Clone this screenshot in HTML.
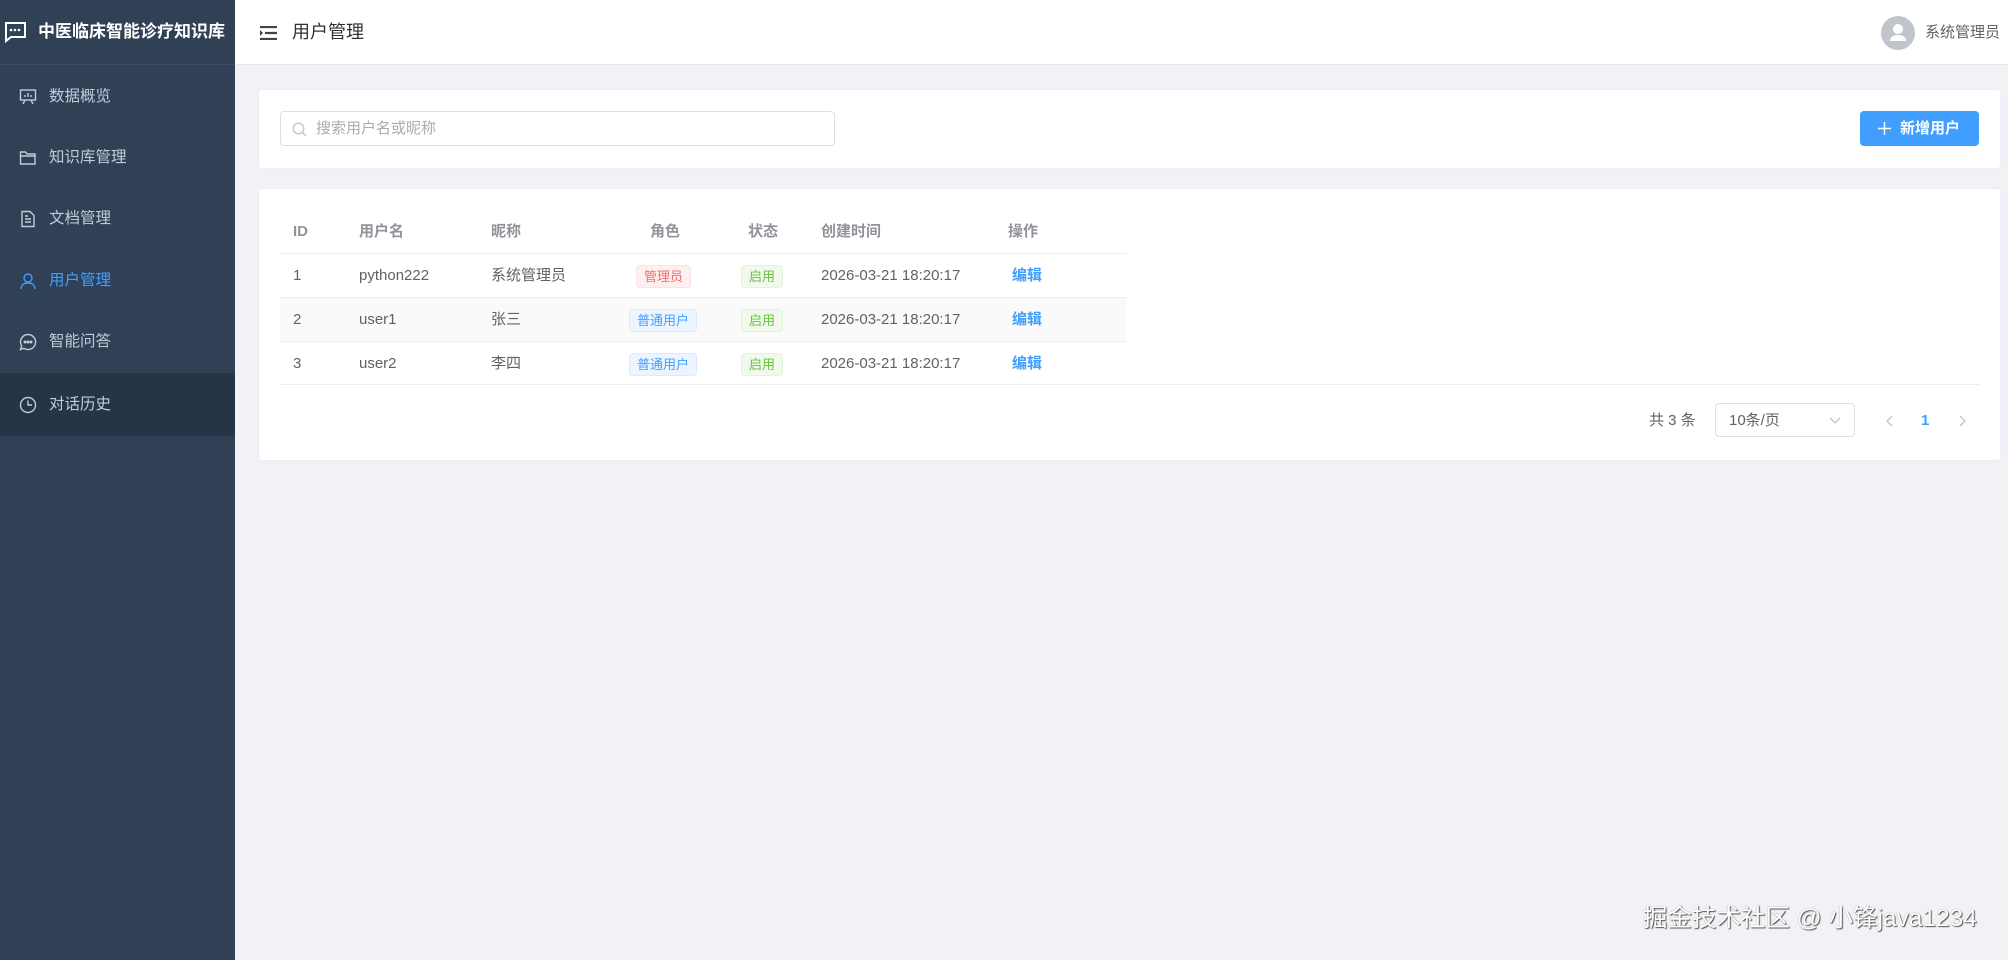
<!DOCTYPE html>
<html><head><meta charset="utf-8"><style>
*{margin:0;padding:0;box-sizing:border-box}
body{width:2008px;height:960px;overflow:hidden;background:#f0f2f5;font-family:"Liberation Sans","Noto Sans CJK SC",sans-serif;position:relative;color:#606266}
.side{position:absolute;left:0;top:0;width:235px;height:960px;background:#304156}
.logo{height:65px;border-bottom:1px solid #3b4a61;display:flex;align-items:center;padding-left:3px;color:#fff;font-weight:bold;font-size:17px;white-space:nowrap;line-height:20px}
.logo svg{margin-right:11px;flex:none}
.item{position:absolute;left:0;width:235px;height:62px;display:flex;align-items:center;padding-left:19px;color:#bfcbd9;font-size:15.5px;line-height:20px}
.item svg{margin-right:12px}
.item.act{color:#409eff}
.hdr{position:absolute;left:235px;top:0;right:0;height:65px;background:#fff;border-bottom:1px solid #e6e6e6}
.card{position:absolute;left:258px;width:1743px;background:#fff;border:1px solid #ebeef5;border-radius:4px}
.t{position:absolute;font-size:15px;color:#606266;white-space:nowrap;line-height:20px}
.th{position:absolute;font-size:15px;color:#909399;font-weight:bold;white-space:nowrap;line-height:20px}
.tag{position:absolute;height:23px;line-height:21px;font-size:13px;padding:0 7px;border-radius:4px;border:1px solid}
.red{color:#f56c6c;background:#fef0f0;border-color:#fde2e2}
.blue{color:#409eff;background:#ecf5ff;border-color:#d9ecff}
.green{color:#67c23a;background:#f0f9eb;border-color:#e1f3d8}
.line{position:absolute;height:1px;background:#ebeef5}
</style></head><body>
<div class="side">
<div class="logo"><svg width="24" height="22" viewBox="0 0 24 22"><path d="M2 2h20v14H8l-5 4V2z" fill="none" stroke="#fff" stroke-width="2"/><circle cx="8" cy="9" r="1.3" fill="#fff"/><circle cx="12" cy="9" r="1.3" fill="#fff"/><circle cx="16" cy="9" r="1.3" fill="#fff"/></svg>中医临床智能诊疗知识库</div>
<div class="item" style="top:66px"><svg width="18" height="18" viewBox="0 0 18 18" fill="none" stroke="#bfcbd9" stroke-width="1.4"><rect x="1.5" y="2" width="15" height="10"/><path d="M6 12l-2 4M12 12l2 4M6 9V7M9 9V5M12 9V7"/></svg>数据概览</div>
<div class="item" style="top:127px"><svg width="18" height="18" viewBox="0 0 18 18" fill="none" stroke="#bfcbd9" stroke-width="1.4"><path d="M1.5 3h5l1.5 2h8v10h-14.5zM1.5 7h15"/></svg>知识库管理</div>
<div class="item" style="top:188px"><svg width="18" height="18" viewBox="0 0 18 18" fill="none" stroke="#bfcbd9" stroke-width="1.4"><path d="M3 1.5h8l4 4v11H3zM6 9h6M6 12h6M6 6h3"/></svg>文档管理</div>
<div class="item act" style="top:250px"><svg width="18" height="18" viewBox="0 0 18 18" fill="none" stroke="#409eff" stroke-width="1.4"><circle cx="9" cy="6" r="4"/><path d="M2 17c0-4 3-6 7-6s7 2 7 6"/></svg>用户管理</div>
<div class="item" style="top:311px"><svg width="18" height="18" viewBox="0 0 18 18" fill="none" stroke="#bfcbd9" stroke-width="1.4"><path d="M9 1.5a7.5 7.5 0 1 1-4 13.8L1.5 16.5l1.2-3.5A7.5 7.5 0 0 1 9 1.5z"/><circle cx="6" cy="9" r=".8" fill="#bfcbd9"/><circle cx="9" cy="9" r=".8" fill="#bfcbd9"/><circle cx="12" cy="9" r=".8" fill="#bfcbd9"/></svg>智能问答</div>
<div class="item" style="top:373px;background:#263445;height:63px"><svg width="18" height="18" viewBox="0 0 18 18" fill="none" stroke="#bfcbd9" stroke-width="1.4"><circle cx="9" cy="9" r="7.5"/><path d="M9 4.5V9h4"/></svg>对话历史</div>
</div>
<div class="hdr">
<svg style="position:absolute;left:25px;top:26px" width="17" height="14" viewBox="0 0 17 14"><path d="M0 1h17M5 7h12M0 13h17" stroke="#444" stroke-width="2.2"/><path d="M0 4l3 3-3 3z" fill="#444"/></svg>
<div style="position:absolute;left:57px;top:21px;font-size:18px;color:#303133;line-height:22px">用户管理</div>
<svg style="position:absolute;left:1646px;top:16px" width="34" height="34" viewBox="0 0 34 34"><circle cx="17" cy="17" r="17" fill="#c0c4cc"/><circle cx="17" cy="13" r="5" fill="#fff"/><path d="M9 25c0-4 3.5-6 8-6s8 2 8 6z" fill="#fff"/></svg>
<div style="position:absolute;left:1690px;top:23px;font-size:15px;color:#606266;line-height:20px">系统管理员</div>
</div>
<div class="card" style="top:89px;height:80px">
<div style="position:absolute;left:21px;top:21px;width:555px;height:35px;border:1px solid #dcdfe6;border-radius:4px">
<svg style="position:absolute;left:11px;top:10px" width="15" height="15" viewBox="0 0 15 15" fill="none" stroke="#c0c4cc" stroke-width="1.4"><circle cx="6.5" cy="6.5" r="5.3"/><path d="M10.5 10.5l3.5 3.5"/></svg>
<div style="position:absolute;left:35px;top:7px;font-size:15px;color:#a8abb2;line-height:20px">搜索用户名或昵称</div></div>
<div style="position:absolute;left:1601px;top:21px;width:119px;height:35px;background:#409eff;border-radius:4px;color:#fff;font-size:15px;font-weight:bold;line-height:35px;padding-left:40px">新增用户
<svg style="position:absolute;left:18px;top:11px" width="13" height="13" viewBox="0 0 13 13"><path d="M6.5 0v13M0 6.5h13" stroke="#fff" stroke-width="1.4"/></svg></div>
</div>
<div class="card" style="top:188px;height:273px"></div>
<div class="th" style="left:293px;top:222px">ID</div>
<div class="th" style="left:359px;top:222px">用户名</div>
<div class="th" style="left:491px;top:222px">昵称</div>
<div class="th" style="left:650px;top:222px">角色</div>
<div class="th" style="left:748px;top:222px">状态</div>
<div class="th" style="left:821px;top:222px">创建时间</div>
<div class="th" style="left:1008px;top:222px">操作</div>
<div class="line" style="left:280px;top:253px;width:847px"></div>
<div style="position:absolute;left:280px;top:298px;width:847px;height:43px;background:#fafafa"></div>
<div class="line" style="left:280px;top:297px;width:847px"></div>
<div class="line" style="left:280px;top:341px;width:847px"></div>
<div class="line" style="left:280px;top:384px;width:1700px"></div>

<div class="t" style="left:293px;top:266px">1</div><div class="t" style="left:359px;top:266px">python222</div><div class="t" style="left:491px;top:266px">系统管理员</div>
<div class="tag red" style="left:636px;top:265px">管理员</div><div class="tag green" style="left:741px;top:265px">启用</div>
<div class="t" style="left:821px;top:266px">2026-03-21 18:20:17</div><div class="t" style="left:1012px;top:266px;color:#409eff;font-weight:bold">编辑</div>

<div class="t" style="left:293px;top:310px">2</div><div class="t" style="left:359px;top:310px">user1</div><div class="t" style="left:491px;top:310px">张三</div>
<div class="tag blue" style="left:629px;top:309px">普通用户</div><div class="tag green" style="left:741px;top:309px">启用</div>
<div class="t" style="left:821px;top:310px">2026-03-21 18:20:17</div><div class="t" style="left:1012px;top:310px;color:#409eff;font-weight:bold">编辑</div>

<div class="t" style="left:293px;top:354px">3</div><div class="t" style="left:359px;top:354px">user2</div><div class="t" style="left:491px;top:354px">李四</div>
<div class="tag blue" style="left:629px;top:353px">普通用户</div><div class="tag green" style="left:741px;top:353px">启用</div>
<div class="t" style="left:821px;top:354px">2026-03-21 18:20:17</div><div class="t" style="left:1012px;top:354px;color:#409eff;font-weight:bold">编辑</div>

<div class="t" style="left:1649px;top:411px">共 3 条</div>
<div style="position:absolute;left:1715px;top:403px;width:140px;height:34px;border:1px solid #dcdfe6;border-radius:4px"><div style="position:absolute;left:13px;top:7px;font-size:15px;color:#606266;line-height:20px">10条/页</div>
<svg style="position:absolute;left:113px;top:13px" width="12" height="8" viewBox="0 0 12 8"><path d="M1 1l5 5 5-5" fill="none" stroke="#c0c4cc" stroke-width="1.3"/></svg></div>
<svg style="position:absolute;left:1886px;top:415px" width="8" height="12" viewBox="0 0 8 12"><path d="M6 1L1 6l5 5" fill="none" stroke="#c0c4cc" stroke-width="1.3"/></svg>
<div class="t" style="left:1921px;top:411px;color:#409eff;font-weight:bold">1</div>
<svg style="position:absolute;left:1958px;top:415px" width="8" height="12" viewBox="0 0 8 12"><path d="M2 1l5 5-5 5" fill="none" stroke="#c0c4cc" stroke-width="1.3"/></svg>
<div style="position:absolute;left:1643px;top:904px;font-size:24.5px;line-height:30px;color:#fff;text-shadow:1px 1px 1px #555,0 0 1px #888;white-space:nowrap">掘金技术社区 @ 小锋java1234</div>
</body></html>
